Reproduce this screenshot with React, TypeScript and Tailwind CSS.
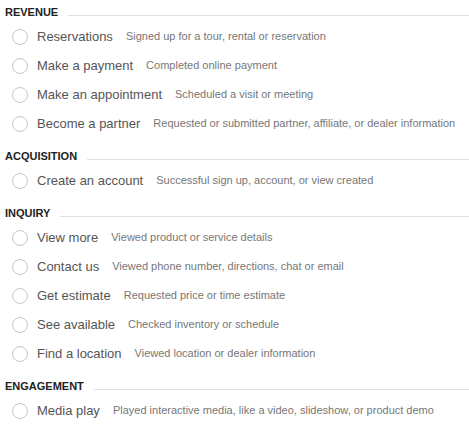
import React from "react";

type Item = { label: string; desc: string };
type Section = { title: string; items: Item[] };

const sections: Section[] = [
  {
    title: "REVENUE",
    items: [
      { label: "Reservations", desc: "Signed up for a tour, rental or reservation" },
      { label: "Make a payment", desc: "Completed online payment" },
      { label: "Make an appointment", desc: "Scheduled a visit or meeting" },
      { label: "Become a partner", desc: "Requested or submitted partner, affiliate, or dealer information" },
    ],
  },
  {
    title: "ACQUISITION",
    items: [{ label: "Create an account", desc: "Successful sign up, account, or view created" }],
  },
  {
    title: "INQUIRY",
    items: [
      { label: "View more", desc: "Viewed product or service details" },
      { label: "Contact us", desc: "Viewed phone number, directions, chat or email" },
      { label: "Get estimate", desc: "Requested price or time estimate" },
      { label: "See available", desc: "Checked inventory or schedule" },
      { label: "Find a location", desc: "Viewed location or dealer information" },
    ],
  },
  {
    title: "ENGAGEMENT",
    items: [{ label: "Media play", desc: "Played interactive media, like a video, slideshow, or product demo" }],
  },
];

export default function App() {
  return (
    <div
      className="w-[469px] h-[431px] bg-white pt-[2px] pl-[5px] overflow-hidden"
      style={{ fontFamily: '"Liberation Sans", Arial, sans-serif' }}
    >
      {sections.map((s) => (
        <div key={s.title} className="mb-[8px]">
          <div className="h-[20px] flex items-center">
            <span className="text-[11px] font-bold text-[#222222]">{s.title}</span>
            <div className="flex-1 ml-[10px] mt-[6px] border-t border-[#e0e0e0]" />
          </div>
          {s.items.map((it) => (
            <div key={it.label} className="h-[29px] flex items-center">
              <span className="ml-[7px] w-[16px] h-[16px] rounded-full border border-[#c8c8c8] bg-white shrink-0" />
              <span className="ml-[9px] text-[13px] text-[#555555] whitespace-nowrap">{it.label}</span>
              <span className="ml-[13px] text-[11px] text-[#777777] whitespace-nowrap">{it.desc}</span>
            </div>
          ))}
        </div>
      ))}
    </div>
  );
}
